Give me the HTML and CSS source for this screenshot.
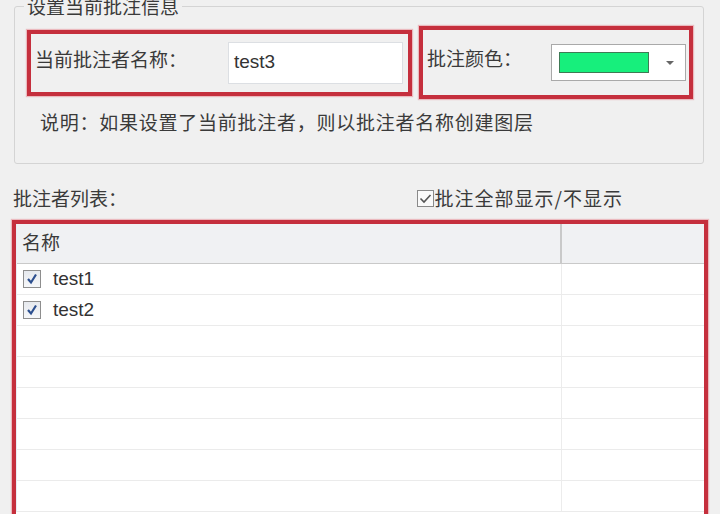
FILE: index.html
```html
<!DOCTYPE html>
<html lang="zh-CN">
<head>
<meta charset="utf-8">
<title>批注设置</title>
<link rel="stylesheet" href="styles.css">
</head>
<body>
<div class="page">
  <fieldset class="group">
    <legend class="group-title">设置当前批注信息</legend>
    <div class="settings-row">
      <div class="mark mark-name">
        <span class="label">当前批注者名称：</span>
        <div class="textbox">test3</div>
      </div>
      <div class="mark mark-color">
        <span class="label">批注颜色：</span>
        <div class="combo">
          <span class="swatch"></span>
          <span class="arrow"></span>
        </div>
      </div>
    </div>
    <p class="desc">说明：如果设置了当前批注者，则以批注者名称创建图层</p>
  </fieldset>

  <div class="list-bar">
    <span class="label">批注者列表：</span>
    <label class="toggle-all">
      <span class="plain-check">
        <svg width="13" height="11" viewBox="0 0 13 11"><path d="M1.5 5.5 L5 9 L11.5 2" fill="none" stroke="#555" stroke-width="1.6"/></svg>
      </span>
      <span class="label">批注全部显示/不显示</span>
    </label>
  </div>

  <div class="mark mark-list">
    <div class="grid">
      <div class="grid-head">
        <div class="cell col-name">名称</div>
        <div class="cell col-extra"></div>
      </div>
      <div class="grid-row">
        <div class="cell col-name"><span class="row-check"><svg width="12" height="12" viewBox="0 0 12 12"><path d="M2 6 L5 9.5 L10 1.5" fill="none" stroke="#2c4f8f" stroke-width="2.2"/></svg></span><span class="item">test1</span></div>
        <div class="cell col-extra"></div>
      </div>
      <div class="grid-row">
        <div class="cell col-name"><span class="row-check"><svg width="12" height="12" viewBox="0 0 12 12"><path d="M2 6 L5 9.5 L10 1.5" fill="none" stroke="#2c4f8f" stroke-width="2.2"/></svg></span><span class="item">test2</span></div>
        <div class="cell col-extra"></div>
      </div>
      <div class="grid-row"><div class="cell col-name"></div><div class="cell col-extra"></div></div>
      <div class="grid-row"><div class="cell col-name"></div><div class="cell col-extra"></div></div>
      <div class="grid-row"><div class="cell col-name"></div><div class="cell col-extra"></div></div>
      <div class="grid-row"><div class="cell col-name"></div><div class="cell col-extra"></div></div>
      <div class="grid-row"><div class="cell col-name"></div><div class="cell col-extra"></div></div>
      <div class="grid-row"><div class="cell col-name"></div><div class="cell col-extra"></div></div>
    </div>
  </div>
</div>
</body>
</html>
```

FILE: styles.css
```css
html, body {
  margin: 0;
  padding: 0;
  background: #f0f0f0;
  overflow: hidden;
}
body {
  width: 720px;
  height: 514px;
  font-family: "Noto Sans CJK SC", "Liberation Sans", sans-serif;
  font-size: 19px;
  color: #3a3a3a;
}
.page {
  display: flex;
  flex-direction: column;
  height: 514px;
  overflow: hidden;
}
.group {
  margin: -5px 16px 0 14px;
  padding: 0;
  border: 1px solid #d4d4d4;
  border-radius: 3px;
  height: 169px;
  box-sizing: border-box;
  display: block;
  flex: none;
}
.group-title {
  margin-left: 9px;
  padding: 0 3px;
  line-height: 22px;
  height: 22px;
  font-size: 19px;
  color: #3a3a3a;
}
.settings-row {
  display: flex;
  align-items: center;
  gap: 7px;
  margin: 9px 0 0 12px;
}
.mark {
  border: 4px solid #c52f3d;
  box-shadow: 0 0 1px 1px rgba(230, 130, 140, 0.5);
  box-sizing: border-box;
}
.mark-name {
  width: 385px;
  height: 66px;
  display: flex;
  align-items: center;
  padding: 0 5px 0 4px;
}
.mark-color {
  width: 274px;
  height: 73px;
  display: flex;
  align-items: center;
  padding: 0 3px 0 4px;
}
.label {
  white-space: nowrap;
  line-height: 24px;
}
.mark-name .label {
  margin-top: -7px;
}
.mark-color .label {
  margin-top: -9px;
}
.textbox {
  margin-left: auto;
  width: 175px;
  height: 42px;
  box-sizing: border-box;
  background: #ffffff;
  border: 1px solid #dcdfe3;
  font-family: "Liberation Sans", "Noto Sans", sans-serif;
  font-size: 19px;
  color: #333;
  line-height: 38px;
  padding-left: 5px;
}
.combo {
  margin-left: auto;
  width: 135px;
  height: 37px;
  box-sizing: border-box;
  background: #ffffff;
  border: 1px solid #a9a9a9;
  display: flex;
  align-items: center;
  padding-left: 7px;
}
.swatch {
  width: 90px;
  height: 21px;
  box-sizing: border-box;
  background: #17ef7c;
  border: 1px solid #3f7a55;
}
.arrow {
  margin-left: 17px;
  width: 0;
  height: 0;
  border-left: 4px solid transparent;
  border-right: 4px solid transparent;
  border-top: 4px solid #666;
}
.desc {
  margin: 10px 0 0 25px;
  line-height: 26px;
  letter-spacing: 0.75px;
  white-space: nowrap;
}
.list-bar {
  display: flex;
  align-items: center;
  justify-content: space-between;
  margin: 21px 97px 0 13px;
  height: 26px;
  flex: none;
}
.toggle-all {
  display: flex;
  align-items: center;
  gap: 1px;
}
.toggle-all .label {
  letter-spacing: 1px;
}
.plain-check {
  width: 17px;
  height: 17px;
  box-sizing: border-box;
  border: 1px solid #8a8a8a;
  background: #fafafa;
  display: flex;
  align-items: center;
  justify-content: center;
}
.mark-list {
  margin: 9px 12px 0 12px;
  height: 320px;
  flex: none;
  background: #ffffff;
}
.grid {
  display: flex;
  flex-direction: column;
  border-left: 1px solid #e6edf5;
}
.grid-head {
  display: flex;
  height: 40px;
  background: #f0f1f3;
  border-bottom: 1px solid #c9c9c9;
  box-sizing: border-box;
}
.grid-head .cell {
  display: flex;
  align-items: center;
}
.grid-head .col-name {
  border-right: 2px solid #c9c9c9;
  padding-left: 5px;
  line-height: 24px;
  padding-bottom: 4px;
}
.grid-row {
  display: flex;
  height: 31px;
  box-sizing: border-box;
  border-bottom: 1px solid #ebebeb;
}
.cell {
  box-sizing: border-box;
}
.col-name {
  width: 545px;
  border-right: 1px solid #ececec;
  display: flex;
  align-items: center;
  padding-left: 6px;
}
.col-extra {
  flex: 1;
}
.row-check {
  width: 18px;
  height: 18px;
  box-sizing: border-box;
  border: 1px solid #8e8e8e;
  background: linear-gradient(#e6e9ee, #f6f7f9);
  display: flex;
  align-items: center;
  justify-content: center;
}
.item {
  margin-left: 12px;
  font-family: "Liberation Sans", "Noto Sans", sans-serif;
  font-size: 19px;
  color: #333;
}
```
